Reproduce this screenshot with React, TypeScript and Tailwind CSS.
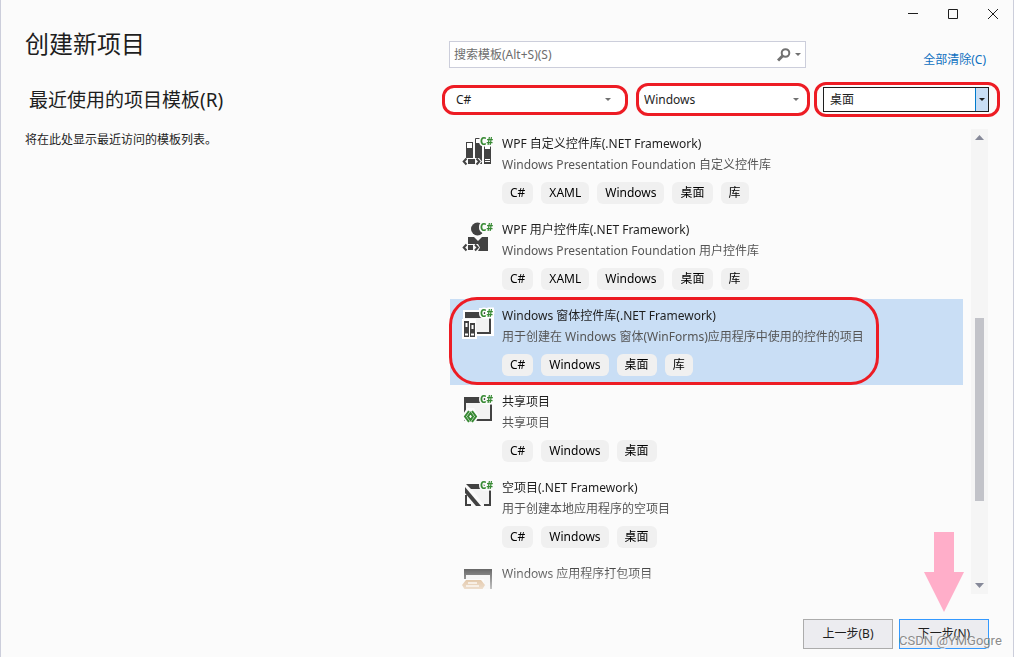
import { useState } from "react";
import type { ReactNode } from "react";

type Template = {
  name: string;
  description?: string;
  tags: string[];
  icon: ReactNode;
};

const INK = "#424242";
const GREEN = "#388a34";

const CSharpBadge = ({ outline = "#fbfbfb" }: { outline?: string }) => (
  <text
    x="17"
    y="9"
    fontSize="10"
    fontWeight="800"
    fill={GREEN}
    stroke={outline}
    strokeWidth="3"
    paintOrder="stroke"
  >
    C#
  </text>
);

const IconFrame = ({ children }: { children: ReactNode }) => (
  <svg
    width="32"
    height="32"
    viewBox="0 0 32 32"
    className="shrink-0 overflow-visible"
    aria-hidden="true"
  >
    {children}
  </svg>
);

const ControlLibraryIcon = () => (
  <IconFrame>
    <rect x="3.5" y="6.5" width="6" height="18" fill="#fff" stroke={INK} />
    <path d="M3 12h7v12H3z" fill={INK} />
    <path d="M12.5 8V2.500H18V8" fill="#fff" stroke={INK} />
    <path d="M12 7h7v21h-7z" fill={INK} />
    <path d="M21.500 10v17h6V10" fill="#fff" stroke={INK} />
    <path d="M21 13h7v15h-7z" fill={INK} />
    <path d="M22 23.5h5M22 25.500h5" stroke="#fff" />
    <path d="M-1 22h17l3 3.500-3 3.500H-1z" fill="#fbfbfb" />
    <path d="M3.500 22.500.700 25.500l2.800 3M13.500 22.500l2.800 3-2.800 3" fill="none" stroke={INK} strokeWidth="2" />
    <rect x="5" y="23" width="7" height="5" fill={INK} />
    <CSharpBadge />
  </IconFrame>
);

const UserControlIcon = () => (
  <IconFrame>
    <circle cx="14.500" cy="7" r="6.500" fill={INK} />
    <circle cx="22" cy="6" r="5.500" fill="#fbfbfb" />
    <path d="M5 15h6l4 4 4-4h6v14H5z" fill={INK} />
    <path d="M-1 22h16l2 3.500-2 3.500H-1z" fill="#fbfbfb" />
    <path d="M3.500 22.500.700 25.500l2.800 3M12 22.500l2.800 3-2.800 3" fill="none" stroke={INK} strokeWidth="2" />
    <rect x="5" y="23" width="5" height="5" fill={INK} />
    <CSharpBadge />
  </IconFrame>
);

const WindowShape = () => (
  <>
    <rect x="2" y="4" width="26" height="22" fill="#f3f3f3" />
    <path d="M1 3h28v6H1z" fill={INK} />
    <path d="M2 9v17h26V8" fill="none" stroke={INK} strokeWidth="2" />
  </>
);

const FormsLibraryIcon = () => (
  <IconFrame>
    <path d="M0 2h16V0h15v28H14v3H-1V11h1z" fill="#fff" />
    <rect x="2" y="9" width="25" height="16" fill="#f3f3f3" />
    <path d="M2 4h26v22H14v-2h12V10H2z" fill={INK} />
    <rect x="-1" y="11" width="14" height="20" fill="#fff" />
    <path d="M1 13h5v16H1zM7 15h5v14H7z" fill={INK} />
    <path d="M3.500 15v4M9.500 17v4M2 26.500h3M8 26.500h3" stroke="#fff" strokeWidth="2" />
    <CSharpBadge outline="#fff" />
  </IconFrame>
);

const SharedIcon = () => (
  <IconFrame>
    <WindowShape />
    <path d="m4 14-5 8 5 9h7l5-9-5-8z" fill="#fbfbfb" />
    <path
      d="M6 17 2 22.500 6 28M9 17l4 5.500L9 28M7.500 19l-2.500 3.500 2.500 3.500 2.500-3.500z"
      fill="none"
      stroke={GREEN}
      strokeWidth="2"
    />
    <CSharpBadge />
  </IconFrame>
);

const EmptyProjectIcon = () => (
  <IconFrame>
    <path d="M8 8h18v17H21z" fill="#f3f3f3" />
    <path d="M3 4h18l2 5H8z" fill={INK} />
    <path d="m2 7 16 19h-5L2 13z" fill={INK} />
    <path d="M3 15v10h5M21 25h6V8" fill="none" stroke={INK} strokeWidth="2" />
    <CSharpBadge />
  </IconFrame>
);

const PackagingIcon = () => (
  <IconFrame>
    <WindowShape />
    <path d="M-2 13h23v19H-2z" fill="#fbfbfb" />
    <path d="M3 14h15l4 5-3 5H2l-3-5z" fill="#cf9d66" />
    <path d="M5 17h9M3 20h13" stroke="#f3dfc8" strokeWidth="2" />
  </IconFrame>
);

const templates: Template[] = [
  {
    name: "WPF 自定义控件库(.NET Framework)",
    description: "Windows Presentation Foundation 自定义控件库",
    tags: ["C#", "XAML", "Windows", "桌面", "库"],
    icon: <ControlLibraryIcon />,
  },
  {
    name: "WPF 用户控件库(.NET Framework)",
    description: "Windows Presentation Foundation 用户控件库",
    tags: ["C#", "XAML", "Windows", "桌面", "库"],
    icon: <UserControlIcon />,
  },
  {
    name: "Windows 窗体控件库(.NET Framework)",
    description: "用于创建在 Windows 窗体(WinForms)应用程序中使用的控件的项目",
    tags: ["C#", "Windows", "桌面", "库"],
    icon: <FormsLibraryIcon />,
  },
  {
    name: "共享项目",
    description: "共享项目",
    tags: ["C#", "Windows", "桌面"],
    icon: <SharedIcon />,
  },
  {
    name: "空项目(.NET Framework)",
    description: "用于创建本地应用程序的空项目",
    tags: ["C#", "Windows", "桌面"],
    icon: <EmptyProjectIcon />,
  },
  {
    name: "Windows 应用程序打包项目",
    tags: [],
    icon: <PackagingIcon />,
  },
];

const Caret = ({ className }: { className?: string }) => (
  <svg width="6" height="3" viewBox="0 0 6 3" className={className} aria-hidden="true">
    <path d="M0 0h6L3 3z" fill="currentColor" />
  </svg>
);

const TitleBar = () => (
  <header className="flex h-7 shrink-0 justify-end text-[#1e1e1e]">
    <button type="button" aria-label="最小化" className="flex w-10 items-center justify-center">
      <svg width="10" height="10" viewBox="0 0 10 10">
        <path d="M0 4.500h10" stroke="currentColor" />
      </svg>
    </button>
    <button type="button" aria-label="最大化" className="flex w-10 items-center justify-center">
      <svg width="10" height="10" viewBox="0 0 10 10">
        <path d="M.5.5h9v9h-9z" fill="none" stroke="currentColor" />
      </svg>
    </button>
    <button type="button" aria-label="关闭" className="flex w-10 items-center justify-center">
      <svg width="10" height="10" viewBox="0 0 10 10">
        <path d="m0 0 10 10M10 0 0 10" stroke="currentColor" />
      </svg>
    </button>
  </header>
);

const SearchRow = () => (
  <div className="flex items-start pr-[27px] pl-[7px]">
    <div className="flex h-[27px] flex-1 items-center border border-[#cccedb] bg-white pr-1 pl-1">
      <input
        type="text"
        aria-label="搜索模板"
        placeholder="搜索模板(Alt+S)(S)"
        className="min-w-0 flex-1 bg-transparent outline-none placeholder:text-[#6d6d6d]"
      />
      <button type="button" aria-label="搜索" className="text-[#717171]">
        <svg width="14" height="14" viewBox="0 0 14 14" fill="none" stroke="currentColor">
          <circle cx="8.500" cy="5" r="3.800" strokeWidth="2" />
          <path d="m6 7.500-5 5" strokeWidth="3" />
        </svg>
      </button>
      <button type="button" aria-label="搜索选项" className="ml-1 text-[#717171]">
        <Caret />
      </button>
    </div>
    <a href="#clear" className="mt-[9px] ml-[117px] leading-5 whitespace-nowrap text-[#0e70c0]">
      全部清除(C)
    </a>
  </div>
);

const Filters = () => (
  <div className="mt-3 grid grid-cols-[186fr_178fr_186fr] items-center gap-x-1 pr-[13px]">
    <div className="relative flex h-[30px] items-center rounded-xl border-3 border-[#ed1c24] bg-white">
      <select aria-label="语言" className="w-full appearance-none bg-transparent pl-[11px] outline-none">
        <option>C#</option>
      </select>
      <Caret className="pointer-events-none absolute right-3.5 text-[#717171]" />
    </div>
    <div className="relative ml-1 flex h-[33px] items-center rounded-xl border-3 border-[#ed1c24] bg-white">
      <select aria-label="平台" className="w-full appearance-none bg-transparent pl-[5px] outline-none">
        <option>Windows</option>
      </select>
      <Caret className="pointer-events-none absolute right-2 text-[#717171]" />
    </div>
    <div className="flex h-[35px] items-center rounded-xl border-3 border-[#ed1c24] pr-2 pl-1.5">
      <div className="relative flex h-[25px] flex-1 items-center border border-[#1e1e1e] bg-white">
        <select aria-label="项目类型" className="w-full appearance-none bg-transparent pl-1.5 outline-none">
          <option>桌面</option>
        </select>
        <span className="pointer-events-none absolute inset-y-0 right-0 flex w-[13px] items-center justify-center border-l border-[#007acc] bg-[#c9def5]">
          <Caret />
        </span>
      </div>
    </div>
  </div>
);

type ItemProps = {
  template: Template;
  selected: boolean;
  onSelect: () => void;
};

const TemplateItem = ({ template, selected, onSelect }: ItemProps) => (
  <li className={selected ? "relative bg-[#c9def5]" : "relative"}>
    <button type="button" onClick={onSelect} className="flex w-full items-start gap-[7px] pl-[13px] text-left">
      <span className="mt-[9px]">{template.icon}</span>
      <span className="flex flex-col pt-1.5 leading-[21px] whitespace-nowrap">
        <span className="text-[#1e1e1e]">{template.name}</span>
        {template.description && <span className="text-[#555555]">{template.description}</span>}
        {template.tags.length > 0 && (
          <span className="mt-[7px] mb-[9px] flex gap-2">
            {template.tags.map((tag) => (
              <span key={tag} className="h-[22px] rounded-md bg-[#f0f0f0] px-2 text-black">
                {tag}
              </span>
            ))}
          </span>
        )}
      </span>
    </button>
    {selected && (
      <span className="pointer-events-none absolute -top-0.5 bottom-0 -left-px w-[430px] rounded-[28px] border-3 border-[#ed1c24]" />
    )}
  </li>
);

const ScrollBar = () => (
  <div className="mt-0.5 flex w-[17px] flex-col items-center bg-[#f5f5f5] py-1.5 text-[#868999]">
    <svg width="9" height="5" viewBox="0 0 9 5" aria-hidden="true">
      <path d="M0 5h9L4.500 0z" fill="currentColor" />
    </svg>
    <span className="flex-[178]" />
    <span className="w-[9px] flex-[183] bg-[#c2c3c9]" />
    <span className="flex-[82]" />
    <svg width="9" height="5" viewBox="0 0 9 5" aria-hidden="true">
      <path d="M0 0h9L4.500 5z" fill="currentColor" />
    </svg>
  </div>
);

const Footer = () => (
  <footer className="mt-[25px] mb-2 flex shrink-0 justify-end gap-1.5 pr-6">
    <button type="button" className="h-[30px] w-[90px] border border-[#acacac] bg-[#ececf0]">
      上一步(B)
    </button>
    <div className="relative">
      <button type="button" className="h-[30px] w-[90px] border border-[#3399ff] bg-[#ececf0]">
        下一步(N)
      </button>
      <svg
        width="40"
        height="80"
        viewBox="0 0 40 80"
        className="pointer-events-none absolute bottom-full left-[25px] mb-[7px]"
        aria-hidden="true"
      >
        <path d="M10 0h20v40h10L20 80 0 40h10z" fill="#ffaec9" />
      </svg>
      <span className="pointer-events-none absolute top-3 left-0 font-[Roboto,'Noto_Sans_CJK_SC',sans-serif] text-[13px] leading-5 whitespace-nowrap text-[#8c8c8c] [text-shadow:1px_1px_0_#ffffffcc]">
        CSDN @YMGogre
      </span>
    </div>
  </footer>
);

const App = () => {
  const [selected, setSelected] = useState(2);

  return (
    <div className="flex h-screen flex-col border-x border-[#cccedb] bg-[#fbfbfb] font-['Noto_Sans','Noto_Sans_CJK_SC',sans-serif] text-xs text-[#1e1e1e]">
      <TitleBar />
      <div className="flex min-h-0 flex-1">
        <aside className="w-[441px] shrink-0 pl-6">
          <h1 className="text-2xl leading-8">创建新项目</h1>
          <h2 className="mt-[26px] pl-1 text-[19px] leading-7">最近使用的项目模板(R)</h2>
          <p className="mt-4 leading-5">将在此处显示最近访问的模板列表。</p>
        </aside>
        <main className="flex min-w-0 flex-1 flex-col pt-[13px]">
          <SearchRow />
          <Filters />
          <div className="mt-2.5 flex min-h-0 flex-1 gap-2 pr-[25px] pl-1.5">
            <ul className="mb-[5px] min-w-0 flex-1 overflow-y-auto pl-0.5 [mask-image:linear-gradient(to_top,rgb(0_0_0/0.3),black_28px)] [scrollbar-width:none]">
              {templates.map((template, index) => (
                <TemplateItem
                  key={template.name}
                  template={template}
                  selected={index === selected}
                  onSelect={() => setSelected(index)}
                />
              ))}
            </ul>
            <ScrollBar />
          </div>
          <Footer />
        </main>
      </div>
    </div>
  );
};

export default App;
